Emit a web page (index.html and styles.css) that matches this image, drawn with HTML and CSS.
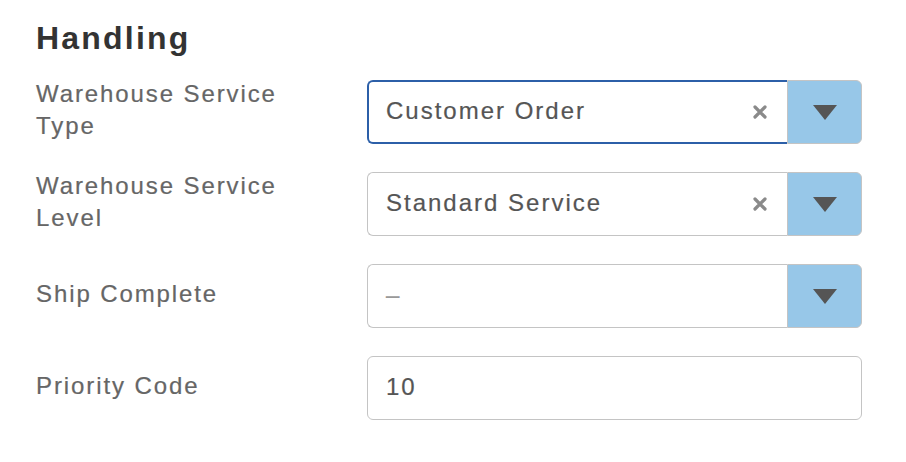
FILE: index.html
```html
<!DOCTYPE html>
<html>
<head>
<meta charset="utf-8">
<link rel="stylesheet" href="styles.css">
</head>
<body>
<div class="page">
  <h2 class="title">Handling</h2>
  <div class="form">
    <div class="label">Warehouse Service<br>Type</div>
    <div class="combo">
      <div class="field focused">
        <span class="value">Customer Order</span>
        <svg class="clear" width="14" height="14" viewBox="0 0 14 14"><path d="M2 2L12 12M12 2L2 12" stroke="#8a8a8a" stroke-width="3.2" stroke-linecap="round"/></svg>
      </div>
      <div class="btn"><svg width="24" height="15" viewBox="0 0 24 15"><polygon points="0,0 24,0 12,15" fill="#555"/></svg></div>
    </div>

    <div class="label">Warehouse Service<br>Level</div>
    <div class="combo">
      <div class="field">
        <span class="value">Standard Service</span>
        <svg class="clear" width="14" height="14" viewBox="0 0 14 14"><path d="M2 2L12 12M12 2L2 12" stroke="#8a8a8a" stroke-width="3.2" stroke-linecap="round"/></svg>
      </div>
      <div class="btn"><svg width="24" height="15" viewBox="0 0 24 15"><polygon points="0,0 24,0 12,15" fill="#555"/></svg></div>
    </div>

    <div class="label">Ship Complete</div>
    <div class="combo">
      <div class="field">
        <span class="value placeholder">–</span>
      </div>
      <div class="btn"><svg width="24" height="15" viewBox="0 0 24 15"><polygon points="0,0 24,0 12,15" fill="#555"/></svg></div>
    </div>

    <div class="label">Priority Code</div>
    <div class="text-input"><span class="value">10</span></div>
  </div>
</div>
</body>
</html>
```
FILE: styles.css
```css
html, body {
  margin: 0;
  padding: 0;
  background: #fff;
}
body {
  font-family: "Liberation Sans", Arial, sans-serif;
}
.page {
  padding: 18px 0 0 36px;
}
.title {
  margin: 0;
  font-size: 32px;
  line-height: 40px;
  font-weight: bold;
  color: #333;
  letter-spacing: 2.2px;
}
.form {
  margin-top: 22px;
  display: grid;
  grid-template-columns: 331px 495px;
  row-gap: 28px;
}
.label {
  font-size: 24px;
  line-height: 32px;
  color: #666;
  letter-spacing: 1.9px;
  align-self: center;
  margin-top: -4px;
  -webkit-text-stroke: 0.2px #666;
}
.combo {
  display: flex;
  height: 64px;
}
.field {
  flex: 1;
  display: flex;
  align-items: center;
  border: 1px solid #c4c4c4;
  border-right: none;
  border-radius: 6px 0 0 6px;
  padding: 0 20px 0 18px;
  box-sizing: border-box;
}
.field.focused {
  border: 2px solid #2c5fa8;
  border-right: none;
  padding-left: 17px;
}
.value {
  flex: 1;
  font-size: 24px;
  color: #555;
  letter-spacing: 2px;
  padding-bottom: 3px;
  -webkit-text-stroke: 0.2px #555;
}
.placeholder {
  color: #999;
}
.clear {
  flex: none;
}
.btn {
  width: 75px;
  flex: none;
  background: #97c7e8;
  border: 1px solid #c4c4c4;
  border-radius: 0 6px 6px 0;
  box-sizing: border-box;
  display: flex;
  align-items: center;
  justify-content: center;
}
.text-input {
  height: 64px;
  border: 1px solid #c4c4c4;
  border-radius: 6px;
  box-sizing: border-box;
  display: flex;
  align-items: center;
  padding-left: 18px;
}
```
